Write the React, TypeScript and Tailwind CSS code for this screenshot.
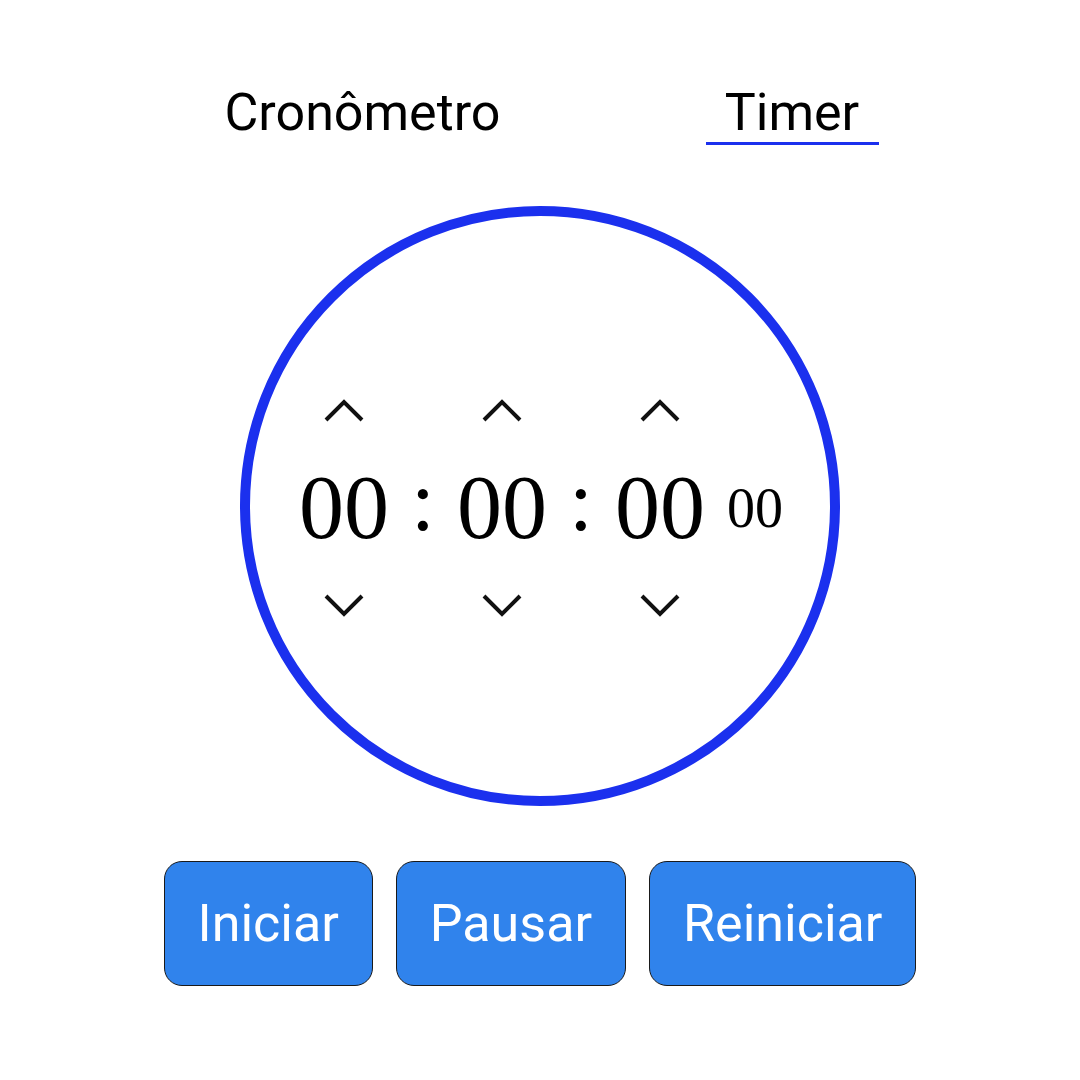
import { useState } from 'react';

const Chevron = ({ dir }: { dir: 'up' | 'down' }) => (
  <svg width="40" height="24" viewBox="0 0 40 24" className="block">
    <polyline
      points={dir === 'up' ? '2,21 20,3 38,21' : '2,3 20,21 38,3'}
      fill="none"
      stroke="#111"
      strokeWidth="4"
    />
  </svg>
);

function Unit({ value }: { value: string }) {
  return (
    <div className="flex flex-col items-center gap-[40px]">
      <button className="flex items-center justify-center">
        <Chevron dir="up" />
      </button>
      <span className="text-[90px] leading-none">{value}</span>
      <button className="flex items-center justify-center">
        <Chevron dir="down" />
      </button>
    </div>
  );
}

const Colon = () => <span className="text-[86px] leading-none pb-[14px]">:</span>;

export default function App() {
  const [tab, setTab] = useState<'crono' | 'timer'>('timer');

  return (
    <div className="min-h-[1080px] w-[1080px] bg-white text-black flex flex-col items-center pt-[87px] font-['Roboto',sans-serif]">
      {/* Tabs */}
      <div className="flex items-start gap-[182px]">
        <button
          onClick={() => setTab('crono')}
          className={`w-[322px] text-center text-[52px] leading-none pb-[3px] border-b-[3px] ${tab === 'crono' ? 'border-[#1b30ee]' : 'border-transparent'}`}
        >
          Cronômetro
        </button>
        <button
          onClick={() => setTab('timer')}
          className={`w-[173px] text-center text-[52px] leading-none pb-[3px] border-b-[3px] ${tab === 'timer' ? 'border-[#1b30ee]' : 'border-transparent'}`}
        >
          Timer
        </button>
      </div>

      {/* Dial */}
      <div className="mt-[61px] w-[600px] h-[600px] rounded-full border-[10px] border-[#1b30ee] flex items-center justify-center">
        <div className="flex items-center gap-[22px] font-['Liberation_Serif',serif] pl-[2px] pt-[4px]">
          <Unit value="00" />
          <Colon />
          <Unit value="00" />
          <Colon />
          <Unit value="00" />
          <span className="text-[56px] leading-none">00</span>
        </div>
      </div>

      {/* Actions */}
      <div className="mt-[55px] flex gap-[23px]">
        {['Iniciar', 'Pausar', 'Reiniciar'].map((label) => (
          <button
            key={label}
            className="h-[125px] px-[33px] rounded-[18px] border border-[#1a1a1a] bg-[#3083ec] text-white text-[52px] leading-none"
          >
            {label}
          </button>
        ))}
      </div>
    </div>
  );
}
